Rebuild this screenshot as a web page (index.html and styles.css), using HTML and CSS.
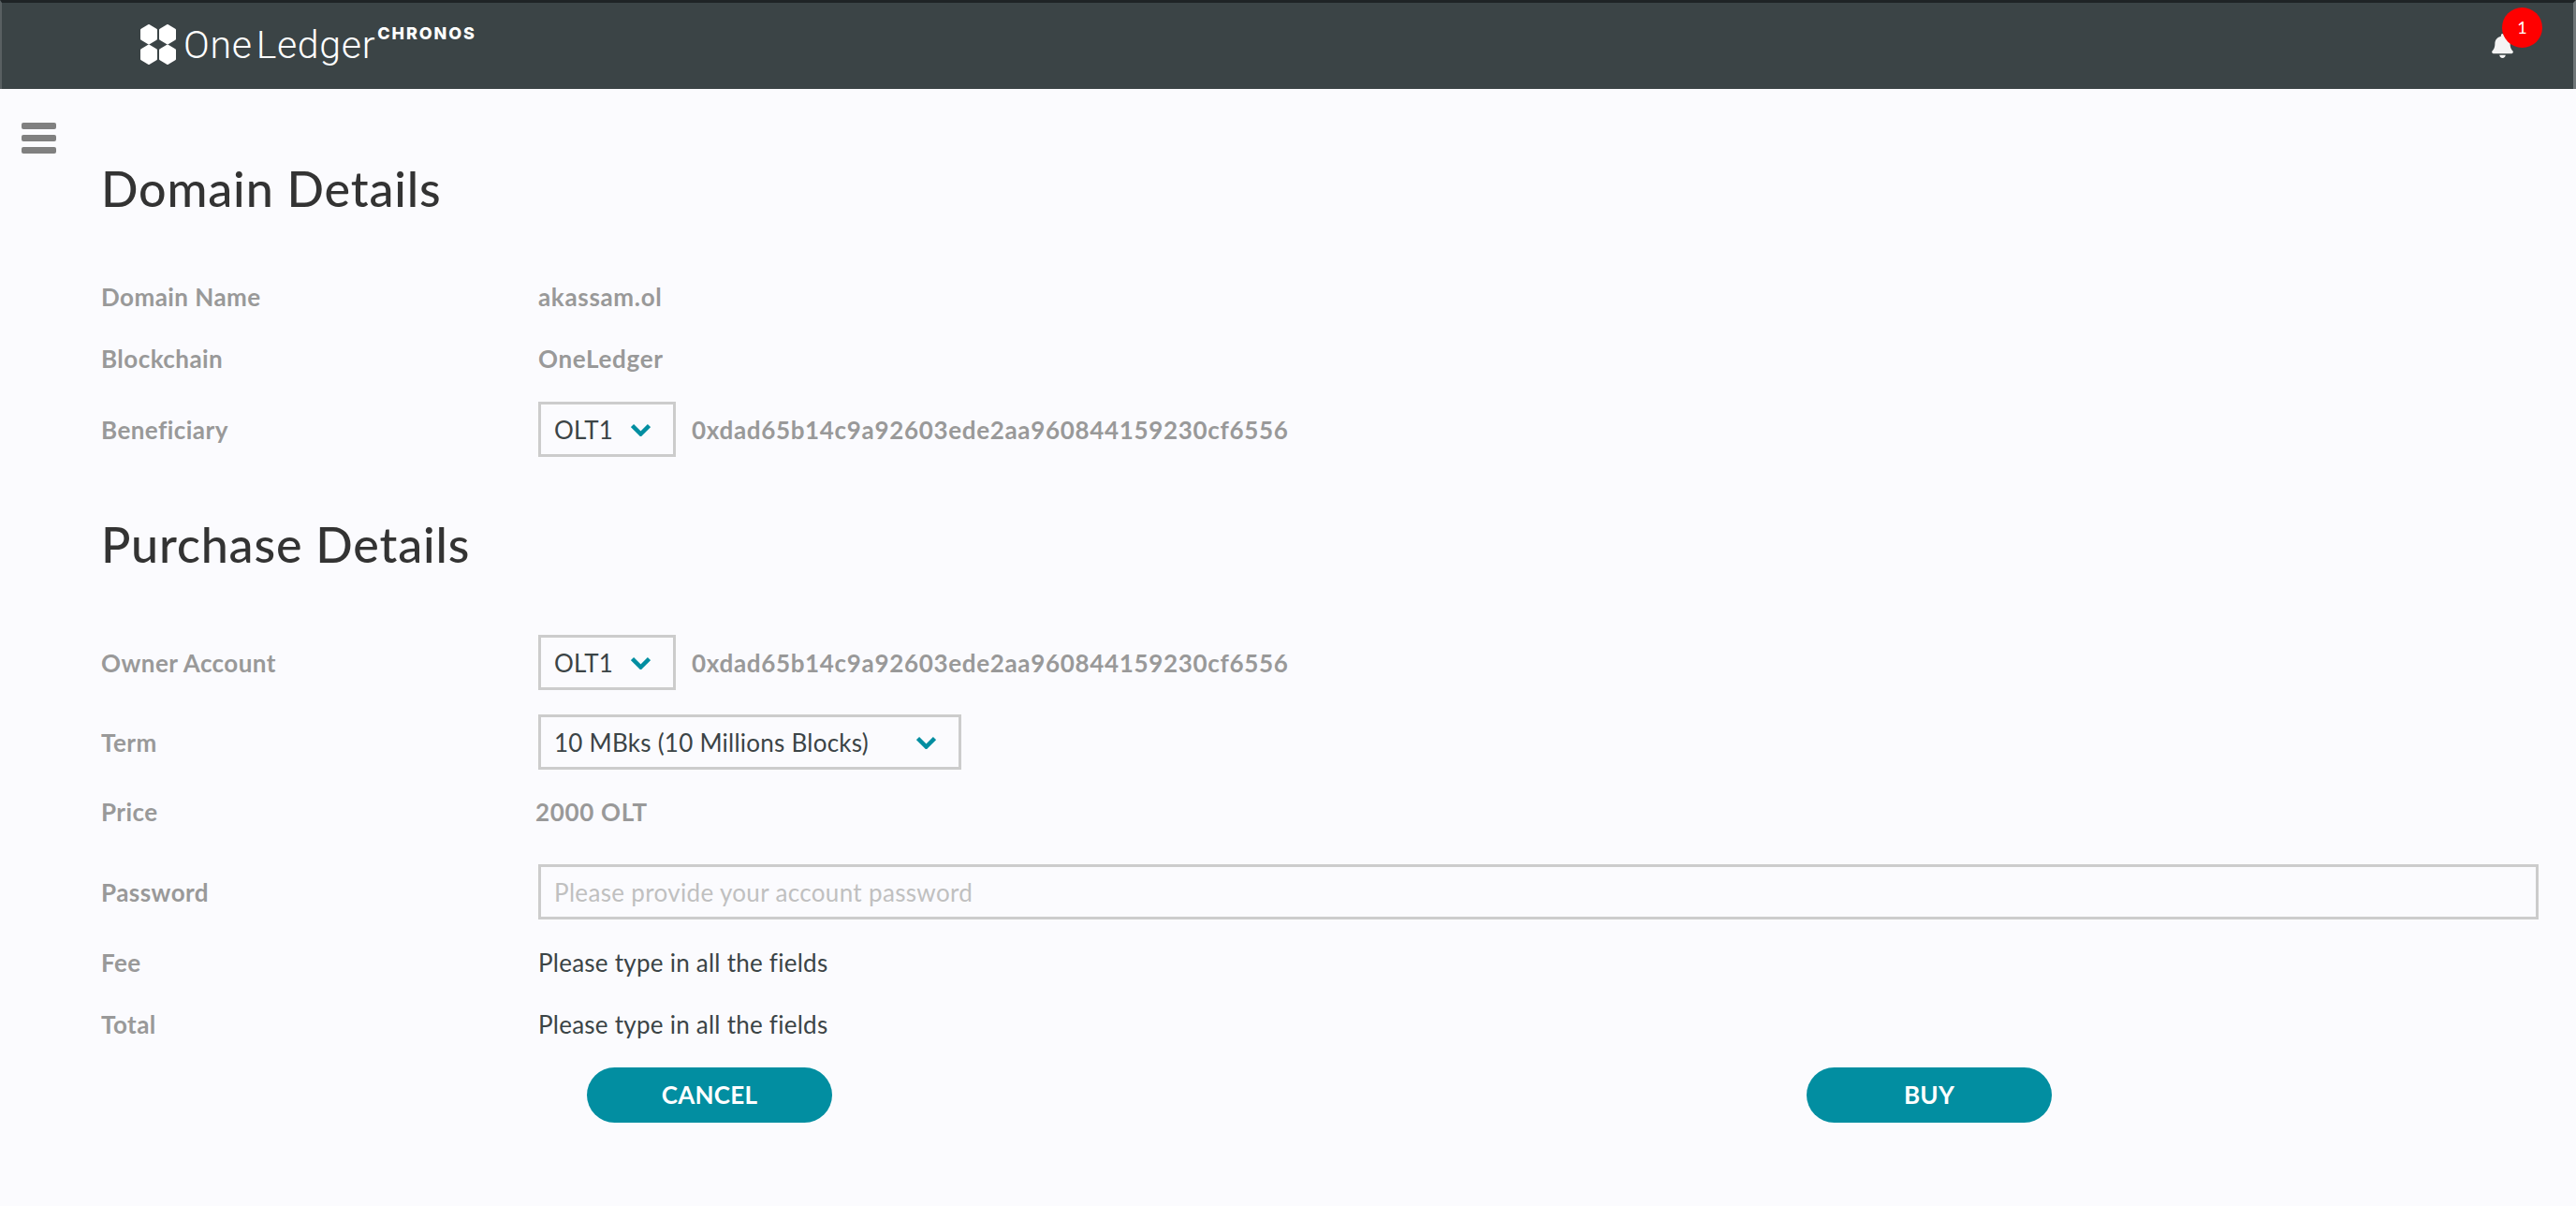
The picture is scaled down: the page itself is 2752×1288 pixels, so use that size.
FILE: index.html
```html
<!doctype html>
<html>
<head>
    <meta charset="utf-8">
    <title>Domain Details</title>
    <link rel="stylesheet" href="styles.css">
</head>

<body>
<div class="header">
    <div class="logo">
        <svg class="logo_mark" viewBox="0 0 38 43">
            <polygon points="9,1.5 16.5,6 16.5,15.5 9,20 1.5,15.5 1.5,6"/>
            <polygon points="29,1.5 36.5,6 36.5,15.5 29,20 21.5,15.5 21.5,6"/>
            <polygon points="9,23 16.5,27.5 16.5,37 9,41.5 1.5,37 1.5,27.5"/>
            <polygon points="29,23 36.5,27.5 36.5,37 29,41.5 21.5,37 21.5,27.5"/>
        </svg>
        <span class="logo_name">One<i class="logo_gap"></i>Ledger</span>
        <span class="logo_sub">CHRONOS</span>
    </div>
    <div class="bell">
        <svg class="bell_icon" viewBox="0 0 448 512">
            <path d="M224 512c35.32 0 63.97-28.65 63.97-64H160.03c0 35.35 28.65 64 63.97 64zm215.39-149.71c-19.32-20.76-55.47-51.99-55.47-154.29 0-77.7-54.48-139.9-127.94-155.16V32c0-17.67-14.32-32-31.98-32s-31.98 14.33-31.98 32v20.84C118.56 68.1 64.08 130.3 64.08 208c0 102.3-36.15 133.53-55.47 154.29-6 6.45-8.66 14.16-8.61 21.71.11 16.4 12.98 32 32.1 32h383.8c19.12 0 32-15.6 32.1-32 .05-7.55-2.61-15.27-8.61-21.71z"/>
        </svg>
        <span class="badge">1</span>
    </div>
</div>

<div class="menu_btn">
    <span></span>
    <span></span>
    <span></span>
</div>

<div class="content">
    <h1 class="title">Domain Details</h1>
    <div class="row">
        <div class="label">Domain Name</div>
        <div class="value">akassam.ol</div>
    </div>
    <div class="row">
        <div class="label">Blockchain</div>
        <div class="value">OneLedger</div>
    </div>
    <div class="row row_field">
        <div class="label">Beneficiary</div>
        <div class="select select_small">
            <span>OLT1</span>
            <svg class="chevron" viewBox="0 0 21 14"><polyline points="1.5,2.5 10.5,11.5 19.5,2.5"/></svg>
        </div>
        <div class="address">0xdad65b14c9a92603ede2aa960844159230cf6556</div>
    </div>

    <h1 class="title title_second">Purchase Details</h1>
    <div class="row row_field">
        <div class="label">Owner Account</div>
        <div class="select select_small">
            <span>OLT1</span>
            <svg class="chevron" viewBox="0 0 21 14"><polyline points="1.5,2.5 10.5,11.5 19.5,2.5"/></svg>
        </div>
        <div class="address">0xdad65b14c9a92603ede2aa960844159230cf6556</div>
    </div>
    <div class="row row_field">
        <div class="label">Term</div>
        <div class="select select_term">
            <span>10 MBks (10 Millions Blocks)</span>
            <svg class="chevron" viewBox="0 0 21 14"><polyline points="1.5,2.5 10.5,11.5 19.5,2.5"/></svg>
        </div>
    </div>
    <div class="row row_price">
        <div class="label">Price</div>
        <div class="value value_price">2000 OLT</div>
    </div>
    <div class="row row_field row_password">
        <div class="label">Password</div>
        <input class="input" type="password" placeholder="Please provide your account password">
    </div>
    <div class="row">
        <div class="label">Fee</div>
        <div class="note">Please type in all the fields</div>
    </div>
    <div class="row">
        <div class="label">Total</div>
        <div class="note">Please type in all the fields</div>
    </div>
    <div class="actions">
        <a class="btn" href="javascript:;">CANCEL</a>
        <a class="btn" href="javascript:;">BUY</a>
    </div>
</div>
</body>

</html>
```

FILE: styles.css
```css
body {
    margin: 0;
    background-color: #fbfbfe;
    font-family: "Lato", "Open Sans", sans-serif;
    font-size: 26px;
    letter-spacing: .25px;
    color: #3b4446;
}

.header {
    height: 92px;
    border-top: 3px solid #1f2426;
    border-left: 2px solid #596062;
    border-right: 3px solid #6f7678;
    background-color: #3b4446;
    display: flex;
    align-items: center;
    justify-content: space-between;
    padding: 0 64px 0 148px;
}

.logo {
    display: flex;
    align-items: flex-start;
    color: #fff;
    margin-top: -2px;
}

.logo_mark {
    width: 38px;
    height: 43px;
    fill: #fff;
    stroke: #fff;
    stroke-width: 3;
    stroke-linejoin: round;
    margin-right: 8px;
}

.logo_name {
    font-family: "Roboto", sans-serif;
    font-size: 41px;
    font-weight: 300;
    line-height: 43px;
    letter-spacing: .7px;
    margin-top: 1px;
}

.logo_gap {
    display: inline-block;
    width: 4px;
}

.logo_sub {
    font-family: "Inter", sans-serif;
    font-size: 18px;
    font-weight: 800;
    line-height: 20px;
    margin-left: 2px;
    letter-spacing: 1.9px;
}

.bell {
    position: relative;
    width: 23px;
    height: 26px;
}

.bell_icon {
    display: block;
    width: 23px;
    height: 26px;
    fill: #f4f4f4;
}

.badge {
    position: absolute;
    left: 11px;
    top: -28px;
    width: 43px;
    height: 43px;
    border-radius: 50%;
    background-color: #f00;
    color: #fff;
    font-size: 18px;
    line-height: 43px;
    text-align: center;
}

.menu_btn {
    width: 37px;
    margin: 36px 0 0 23px;
}

.menu_btn span {
    display: block;
    height: 7px;
    border-radius: 2px;
    background-color: #808080;
    margin-bottom: 6px;
}

.content {
    padding: 0 40px 0 108px;
}

.title {
    margin: -4px 0 48px;
    font-size: 52px;
    font-weight: 500;
    line-height: 70px;
    letter-spacing: .85px;
    color: #333;
}

.title_second {
    margin: 45px 0 49px;
}

.row {
    display: flex;
    align-items: center;
    min-height: 66px;
}

.row_field {
    min-height: 0;
    padding: 13px 0;
}

.row_price {
    min-height: 63px;
}

.row_password {
    margin-top: 12px;
}

.label {
    width: 467px;
    flex-shrink: 0;
    font-weight: 700;
    letter-spacing: .45px;
    color: #999;
}

.value,
.address {
    font-weight: 700;
    letter-spacing: .67px;
    color: #999;
}

.value_price {
    margin-left: -3px;
}

.address {
    margin-left: 17px;
}

.note {
    color: #3b4446;
}

.select {
    box-sizing: border-box;
    height: 59px;
    border: 3px solid #ccc;
    padding: 0 24px 0 14px;
    display: flex;
    align-items: center;
    justify-content: space-between;
}

.select_small {
    width: 147px;
}

.select_term {
    width: 452px;
}

.chevron {
    width: 21px;
    height: 14px;
    fill: none;
    stroke: #028ea1;
    stroke-width: 4.5;
}

.input {
    box-sizing: border-box;
    flex: 1;
    height: 59px;
    border: 3px solid #ccc;
    padding: 0 14px;
    background: transparent;
    font-family: inherit;
    font-size: 26px;
    letter-spacing: .34px;
    color: #3b4446;
    outline: none;
}

.input::placeholder {
    color: #c0c0c0;
    opacity: 1;
}

.actions {
    display: flex;
    gap: 1041px;
    margin-top: 13px;
    padding-left: 519px;
}

.btn {
    width: 262px;
    height: 59px;
    border-radius: 30px;
    background-color: #028ea1;
    color: #fff;
    font-weight: 700;
    line-height: 59px;
    text-align: center;
    text-decoration: none;
}
```
